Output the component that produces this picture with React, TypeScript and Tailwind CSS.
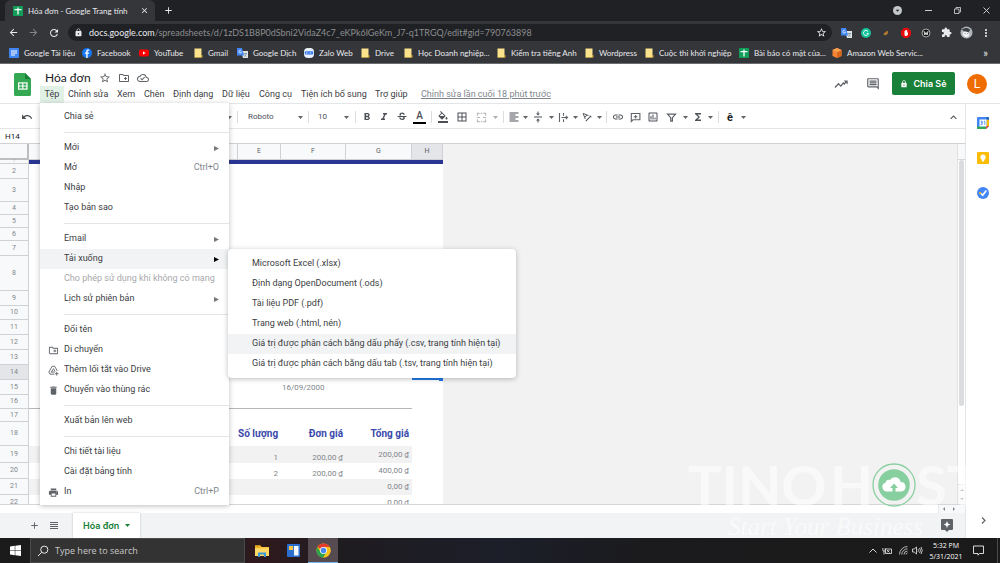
import React from 'react';
import {
  MdAdd,
  MdArrowBack,
  MdArrowDropDown,
  MdArrowForward,
  MdBorderAll,
  MdClose,
  MdDelete,
  MdExpandLess,
  MdExtension,
  MdFormatAlignLeft,
  MdFormatBold,
  MdFormatColorFill,
  MdFormatItalic,
  MdFunctions,
  MdLink,
  MdLock,
  MdMoreVert,
  MdOutlineCloudDone,
  MdOutlineComment,
  MdOutlineCreateNewFolder,
  MdOutlineInsertChart,
  MdPrint,
  MdRefresh,
  MdStarBorder,
  MdStrikethroughS,
  MdTextRotationAngleup,
  MdUndo,
  MdVerticalAlignCenter,
} from 'react-icons/md';

/* ---------- Small drawings ---------- */

const SheetsGlyph = ({ className }: { className: string }) => (
  <svg viewBox="0 0 10 10" className={className}>
    <rect width="10" height="10" rx="0.6" fill="#0f9d58" />
    <path d="M1.5 3.6h7M5 1.5v7" stroke="#fff" strokeWidth="1.3" />
  </svg>
);

const DocsGlyph = () => (
  <svg viewBox="0 0 10 10" className="size-[10px]">
    <rect width="10" height="10" rx="0.8" fill="#4285f4" />
    <path d="M2 3h6M2 5h6M2 7h4" stroke="#fff" strokeWidth="1" />
  </svg>
);

const FacebookGlyph = () => (
  <svg viewBox="0 0 10 10" className="size-[10px]">
    <circle cx="5" cy="5" r="5" fill="#1877f2" />
    <path d="M5.6 10V5.8h1.3l.2-1.4H5.6v-.8c0-.5.2-.8.8-.8h.8V1.6c-1.700-.3-3 .2-3 1.900v.9H2.900v1.400h1.300V10z" fill="#fff" />
  </svg>
);

const YoutubeGlyph = () => (
  <svg viewBox="0 0 10 10" className="size-[10px]">
    <rect y="1.500" width="10" height="7" rx="1.800" fill="#f00" />
    <path d="M4 3.500v3L6.700 5z" fill="#fff" />
  </svg>
);

const FolderGlyph = () => (
  <svg viewBox="0 0 9 10" className="h-[10px] w-[9px]">
    <path d="M.5.5h7v9h-7z" fill="#fbe38e" />
    <path d="M7.500 7h1v2.500h-8V9h6.500z" fill="#d9ac36" />
  </svg>
);

const TranslateGlyph = () => (
  <svg viewBox="0 0 11 10" className="h-[10px] w-[11px]">
    <path d="M4 3h7v7H6z" fill="#dfe3e8" />
    <path d="M6.500 5.500h3.500M8.200 5v1M9.500 5.500C9 7 8 8 7 8.500M7.500 6.500c.5 1 1.200 1.600 2 2" stroke="#607d8b" strokeWidth=".6" fill="none" />
    <path d="M0 0h5l2 7.500H0z" fill="#4285f4" />
    <path d="M4.300 2.900a1.400 1.400 0 1 0 .2 1.200H3.300" stroke="#fff" strokeWidth=".7" fill="none" />
  </svg>
);

const ZaloGlyph = () => (
  <svg viewBox="0 0 10 10" className="size-[10px]">
    <rect width="10" height="10" rx="4" fill="#e9f1ff" />
    <rect x=".8" y="3.300" width="8.400" height="3.200" rx="1" fill="#2f74ee" />
    <path d="M2 4.200h1.300L2 5.700h1.400M4.500 5h1M6.500 4v1.800M7.500 5h.7" stroke="#fff" strokeWidth=".5" fill="none" />
  </svg>
);

const AwsGlyph = () => (
  <svg viewBox="0 0 10 10" className="size-[10px]">
    <path d="M5 0l4.500 2v6L5 10 .5 8V2z" fill="#f58534" />
    <path d="M5 4.200L9.500 2v6L5 10z" fill="#d8661c" />
    <path d="M5 0l4.500 2L5 4.200.5 2z" fill="#fa9f4f" />
  </svg>
);

const SheetsLogo = () => (
  <svg viewBox="0 0 17 23" className="h-[23px] w-[17px]">
    <path d="M1.500 0H11l6 6v15.500a1.500 1.500 0 0 1-1.500 1.500h-14A1.500 1.500 0 0 1 0 21.500v-20A1.500 1.500 0 0 1 1.500 0z" fill="#34a853" />
    <path d="M11 0l6 6h-6z" fill="#188038" />
    <path d="M4 9.300h9.600v7.400H4z" fill="#fff" />
    <path d="M5.300 10.500H8.200v2H5.300zM9.400 10.500h2.900v2H9.400zM5.300 13.600H8.200v2H5.300zM9.400 13.600h2.900v2H9.400z" fill="#34a853" />
  </svg>
);

const ActivityGlyph = () => (
  <svg viewBox="0 0 14 14" className="size-[14px]">
    <path d="M1 10.500l3.500-3.700 2.300 2.300L9.300 6l1 1 2-2.500" stroke="#5f6368" strokeWidth="1.300" fill="none" />
    <path d="M9.700 3.500h4v4z" fill="#5f6368" />
  </svg>
);

const DriveShortcutGlyph = () => (
  <svg viewBox="0 0 12 12" className="size-[11px]" fill="none" stroke="#5f6368" strokeWidth="1">
    <path d="M7 10H2.200L.9 7.700 4.500 1.400h2.700l2.900 5" />
    <path d="M3.800 7.700L5.900 4l1.900 3.200M3 7.700h4.300M9.500 7.500v4M7.500 9.500h4" />
  </svg>
);

const MergeGlyph = () => (
  <svg viewBox="0 0 12 12" className="size-[11px]" fill="none" stroke="#b5b8bb" strokeWidth="1.200">
    <path d="M4 1.500H1.500V4M8 1.500h2.500V4M4 10.500H1.500V8M8 10.500h2.500V8M1 6h3.500M7.500 6H11M5.300 1.500h1.400M5.300 10.500h1.400" />
  </svg>
);

const WrapGlyph = () => (
  <svg viewBox="0 0 11 11" className="size-[11px]" fill="none" stroke="#5f6368" strokeWidth="1.100">
    <path d="M1.500 1v9M5.500 1v2.800M5.500 7.200V10M3.500 5.500h6M7.800 3.800l1.700 1.700-1.700 1.700" />
  </svg>
);

const CommentPlusGlyph = () => (
  <svg viewBox="0 0 11 11" className="size-[11px]" fill="none" stroke="#5f6368" strokeWidth="1.100">
    <path d="M1.300 9.500V1.500h8.600v6.300H3z" />
    <path d="M5.600 2.900v3.600M3.800 4.700h3.600" />
  </svg>
);

const FilterGlyph = () => (
  <svg viewBox="0 0 11 11" className="size-[11px]" fill="none" stroke="#5f6368" strokeWidth="1.200">
    <path d="M1.500 2.200h8L6.400 5.700v3.500H4.700V5.700z" />
  </svg>
);

const ChromeLogo = () => (
  <svg viewBox="0 0 16 16" className="size-[15px]">
    <circle cx="8" cy="8" r="7.500" fill="#fbc116" />
    <path d="M8 8L1.500 4.200A7.500 7.500 0 0 1 14.500 4.250H8z" fill="#e33b2e" />
    <path d="M1.500 4.250A7.500 7.500 0 0 0 7.700 15.500L11.200 9.800 8 8 4.800 9.900z" fill="#2ba24c" />
    <path d="M14.500 4.250H8L11.200 9.900 8 15.500A7.500 7.500 0 0 0 14.500 4.250z" fill="#fbc116" />
    <circle cx="8" cy="8" r="3.700" fill="#fff" />
    <circle cx="8" cy="8" r="2.900" fill="#4587f3" />
  </svg>
);

/* ---------- Chrome window ---------- */

const bookmarks = [
  { label: 'Google Tài liệu', icon: <DocsGlyph />, width: 'w-[73px]' },
  { label: 'Facebook', icon: <FacebookGlyph />, width: 'w-[57px]' },
  { label: 'YouTube', icon: <YoutubeGlyph />, width: 'w-[55px]' },
  { label: 'Gmail', icon: <FolderGlyph />, width: 'w-[43px]' },
  { label: 'Google Dịch', icon: <TranslateGlyph />, width: 'w-[67px]' },
  { label: 'Zalo Web', icon: <ZaloGlyph />, width: 'w-[57px]' },
  { label: 'Drive', icon: <FolderGlyph />, width: 'w-[43px]' },
  { label: 'Học Doanh nghiệp...', icon: <FolderGlyph />, width: 'w-[93px]' },
  { label: 'Kiểm tra tiếng Anh', icon: <FolderGlyph />, width: 'w-[88px]' },
  { label: 'Wordpress', icon: <FolderGlyph />, width: 'w-[60px]' },
  { label: 'Cuộc thi khởi nghiệp', icon: <FolderGlyph />, width: 'w-[94px]' },
  { label: 'Bài báo có mặt của...', icon: <SheetsGlyph className="size-[10px]" />, width: 'w-[93px]' },
  { label: 'Amazon Web Servic...', icon: <AwsGlyph />, width: 'w-[93px]' },
];

function BrowserChrome() {
  return (
    <div className="bg-[#35363a] font-['Lato',sans-serif] text-[#e8eaed]">
      <div className="flex h-[21px] items-center bg-[#202124] pl-[5px]">
        <div className="flex h-full w-[150px] items-center rounded-t-md bg-[#35363a] pl-2 pr-[6px]">
          <SheetsGlyph className="size-[10px]" />
          <span className="ml-[5px] text-[8px]">Hóa đơn - Google Trang tính</span>
          <button aria-label="Close tab" className="ml-auto"><MdClose className="size-[9px]" /></button>
        </div>
        <button aria-label="New tab" className="ml-2"><MdAdd className="size-[11px]" /></button>
        <div className="ml-auto flex items-center">
          <button aria-label="Tab search" className="mr-[23px] flex size-[9px] items-center justify-center rounded-full bg-[#c4c7c9] text-[#202124]">
            <MdArrowDropDown className="size-[9px]" />
          </button>
          <button aria-label="Minimize" className="mr-[22px]">
            <svg viewBox="0 0 7 7" className="size-[7px]"><path d="M0 3.500h7" stroke="#ccc" strokeWidth="1" /></svg>
          </button>
          <button aria-label="Restore" className="mr-[22px]">
            <svg viewBox="0 0 7 7" className="size-[7px]" fill="none" stroke="#ddd" strokeWidth=".8">
              <path d="M.5 2h4.500v4.500H.5zM2 2V.5h4.500V5H5" />
            </svg>
          </button>
          <button aria-label="Close" className="mr-[10px]"><svg viewBox="0 0 7 7" className="size-[7px]"><path d="M.5.5l6 6M6.500.5l-6 6" stroke="#ddd" strokeWidth=".9" /></svg></button>
        </div>
      </div>

      <div className="flex h-[23px] items-center pl-2 pr-1">
        <button aria-label="Back" className="w-5"><MdArrowBack className="size-[11px]" /></button>
        <button aria-label="Forward" className="w-5 text-[#85878a]"><MdArrowForward className="size-[11px]" /></button>
        <button aria-label="Reload" className="w-5"><MdRefresh className="size-[12px]" /></button>
        <label className="flex h-[17px] flex-1 items-center rounded-full bg-[#202124] pl-[6px] pr-[5px] text-[9px]">
          <MdLock className="mr-[6px] size-[9px]" />
          <span>docs.google.com</span>
          <input
            aria-label="Address"
            readOnly
            value="/spreadsheets/d/1zDS1B8P0dSbni2VidaZ4c7_eKPk6lGeKm_J7-q1TRGQ/edit#gid=790763898"
            className="min-w-0 flex-1 bg-transparent text-[#8b8d90] outline-none"
          />
          <MdStarBorder className="size-[11px]" />
        </label>
        <div className="ml-1 grid grid-cols-8 [&>*]:w-5">
          <span className="flex items-center justify-center"><TranslateGlyph /></span>
          <span className="flex items-center justify-center">
            <svg viewBox="0 0 10 10" className="size-[10px]">
              <circle cx="5" cy="5" r="5" fill="#15c39a" />
              <path d="M7 3.500a2.500 2.500 0 1 0 .4 2H5.700" stroke="#fff" strokeWidth=".9" fill="none" />
            </svg>
          </span>
          <span className="flex items-center justify-center">
            <svg viewBox="0 0 6 6" className="size-[6px]"><path d="M1 3c1-.3 1.500-.7 2-1.500C4 .5 5.500 1 5 2.800 4.500 5 2.500 5.800 1.300 5 .6 4.500.7 3.500 1 3z" fill="#b5792f" /></svg>
          </span>
          <span className="flex items-center justify-center">
            <svg viewBox="0 0 10 10" className="size-[10px]">
              <path d="M3 0h4l3 3v4l-3 3H3L0 7V3z" fill="#e60b0b" />
              <path d="M3.500 3v3.500c0 1 .7 1.500 1.600 1.500S7 7 7 6V4l-.8 1V2.500L5.400 2l-.7.3z" fill="#fff" />
            </svg>
          </span>
          <span className="flex items-center justify-center">
            <svg viewBox="0 0 10 10" className="size-[10px]" fill="none">
              <circle cx="5" cy="5" r="4" fill="#111" stroke="#ccc" strokeWidth=".8" />
              <path d="M3 3l.8 4L5 5l1.200 2L7 3M3.500 5h3" stroke="#fff" strokeWidth=".8" />
            </svg>
          </span>
          <button aria-label="Extensions" className="flex items-center justify-center"><MdExtension className="size-[11px]" /></button>
          <span className="flex items-center justify-center">
            <svg viewBox="0 0 14 14" className="size-[13px]">
              <circle cx="7" cy="7" r="6.500" fill="#aeb4b8" />
              <path d="M2 4c2-2 6-3 9 0L9 7 5 6z" fill="#3b4146" />
              <path d="M3 7c2-2 6-1 7 1s-1 4-3 4-5-2-4-5z" fill="#f1f2f3" />
              <path d="M5 8h.8M8 8.200h.8" stroke="#333" strokeWidth=".9" />
            </svg>
          </span>
          <button aria-label="Chrome menu" className="flex items-center justify-center"><MdMoreVert className="size-[12px]" /></button>
        </div>
      </div>

      <nav className="flex h-5 items-center border-b border-[#6b6c6f] pb-[3px] pl-[9px] pr-[12px] pt-px text-[8px]">
        {bookmarks.map((b) => (
          <a key={b.label} href="#" className={`flex shrink-0 items-center gap-[5px] whitespace-nowrap ${b.width}`}>
            {b.icon}
            <span>{b.label}</span>
          </a>
        ))}
        <span className="ml-auto text-[11px] leading-none">»</span>
      </nav>
    </div>
  );
}

/* ---------- File menu ---------- */

type MenuItem = {
  label: string;
  icon?: React.ReactNode;
  shortcut?: string;
  arrow?: boolean;
  disabled?: boolean;
};

const fileMenu: MenuItem[][] = [
  [{ label: 'Chia sẻ' }],
  [
    { label: 'Mới', arrow: true },
    { label: 'Mở', shortcut: 'Ctrl+O' },
    { label: 'Nhập' },
    { label: 'Tạo bản sao' },
  ],
  [
    { label: 'Email', arrow: true },
    { label: 'Tải xuống', arrow: true },
    { label: 'Cho phép sử dụng khi không có mạng', disabled: true },
    { label: 'Lịch sử phiên bản', arrow: true },
  ],
  [
    { label: 'Đổi tên' },
    { label: 'Di chuyển', icon: <MdOutlineCreateNewFolder /> },
    { label: 'Thêm lối tắt vào Drive', icon: <DriveShortcutGlyph /> },
    { label: 'Chuyển vào thùng rác', icon: <MdDelete /> },
  ],
  [{ label: 'Xuất bản lên web' }],
  [
    { label: 'Chi tiết tài liệu' },
    { label: 'Cài đặt bảng tính' },
    { label: 'In', icon: <MdPrint />, shortcut: 'Ctrl+P' },
  ],
];

const downloadFormats = [
  'Microsoft Excel (.xlsx)',
  'Định dạng OpenDocument (.ods)',
  'Tài liệu PDF (.pdf)',
  'Trang web (.html, nén)',
  'Giá trị được phân cách bằng dấu phẩy (.csv, trang tính hiện tại)',
  'Giá trị được phân cách bằng dấu tab (.tsv, trang tính hiện tại)',
];

function DownloadSubmenu() {
  return (
    <div className="absolute left-[188px] top-0 z-30 w-72 rounded-sm bg-white pb-1 pt-[5px] shadow-[0_1px_5px_rgba(60,64,67,0.35)]">
      {downloadFormats.map((format, i) => (
        <button
          key={format}
          className={`block h-5 w-full whitespace-nowrap pl-6 text-left text-[9px] text-[#3c4043] ${i === 4 ? 'bg-[#f1f3f4]' : ''}`}
        >
          {format}
        </button>
      ))}
    </div>
  );
}

function FileMenu() {
  return (
    <div className="absolute left-0 top-full z-20 w-[189px] bg-white pb-[3px] pt-1 text-[9px] text-[#3c4043] shadow-[0_1px_5px_rgba(60,64,67,0.35)]">
      {fileMenu.map((group, g) => (
        <div key={group[0].label}>
          {g > 0 && <hr className="my-[5px] ml-6 border-[#e3e5e8]" />}
          {group.map((item) => {
            const open = item.label === 'Tải xuống';
            return (
              <div key={item.label} className="relative">
                <button
                  disabled={item.disabled}
                  className={`flex h-5 w-full items-center whitespace-nowrap pr-[10px] ${open ? 'bg-[#f1f3f4]' : ''} ${item.disabled ? 'text-[#a7a9ac]' : ''}`}
                >
                  <span className="flex w-6 shrink-0 justify-center pl-[3px] text-[11px] text-[#5f6368]">{item.icon}</span>
                  <span>{item.label}</span>
                  {item.shortcut && <span className="ml-auto text-[#80868b]">{item.shortcut}</span>}
                  {item.arrow && (
                    <svg viewBox="0 0 5 5" className={`ml-auto size-[5px] ${open ? 'fill-black' : 'fill-[#777]'}`}>
                      <path d="M0 0l5 2.500L0 5z" />
                    </svg>
                  )}
                </button>
                {open && <DownloadSubmenu />}
              </div>
            );
          })}
        </div>
      ))}
    </div>
  );
}

/* ---------- Sheets header ---------- */

const menus = [
  { label: 'Chỉnh sửa', width: 'w-[49px]' },
  { label: 'Xem', width: 'w-[27px]' },
  { label: 'Chèn', width: 'w-[29px]' },
  { label: 'Định dạng', width: 'w-[49px]' },
  { label: 'Dữ liệu', width: 'w-[37px]' },
  { label: 'Công cụ', width: 'w-[42px]' },
  { label: 'Tiện ích bổ sung', width: 'w-[74px]' },
  { label: 'Trợ giúp', width: 'w-[46px]' },
];

function DocHeader() {
  return (
    <header className="flex h-10 border-b border-[#e3e5e8] bg-white">
      <a href="#" aria-label="Google Sheets" className="ml-[14px] mt-[9px] w-[26px]"><SheetsLogo /></a>
      <div>
        <div className="flex h-[22px] items-center pl-[5px] pt-[6px] text-[#5f6368]">
          <h1 className="w-[54px] font-['Lato',sans-serif] text-[12px] text-[#202124]">Hóa đơn</h1>
          <button aria-label="Star" className="w-[19px]"><MdStarBorder className="size-[12px]" /></button>
          <button aria-label="Move" className="w-[19px]"><MdOutlineCreateNewFolder className="size-[12px]" /></button>
          <button aria-label="Saved to Drive"><MdOutlineCloudDone className="size-[12px]" /></button>
        </div>
        <nav className="flex h-[17px] items-center whitespace-nowrap text-[9px] text-[#3c4043]">
          <div className="relative h-full w-6">
            <button className="h-full w-full bg-[#e2f1e6]">Tệp</button>
            <FileMenu />
          </div>
          {menus.map((m) => (
            <button key={m.label} className={`pl-1 text-left ${m.width}`}>{m.label}</button>
          ))}
          <a href="#" className="ml-1 text-[#80868b] underline">Chỉnh sửa lần cuối 18 phút trước</a>
        </nav>
      </div>
      <div className="ml-auto flex items-center pr-[13px] text-[#5f6368]">
        <button aria-label="Activity" className="mr-[18px]"><ActivityGlyph /></button>
        <button aria-label="Comments" className="mr-3"><MdOutlineComment className="size-[14px]" /></button>
        <button className="mr-3 flex h-[23px] w-[63px] items-center justify-center gap-[5px] rounded-[2px] bg-[#188038] font-['Inter',sans-serif] text-[9px] font-semibold text-white">
          <MdLock className="size-[8px]" />
          Chia Sẻ
        </button>
        <button aria-label="Account" className="size-5 rounded-full bg-[#ef6c00] text-[12px] text-white">L</button>
      </div>
    </header>
  );
}

/* ---------- Toolbar ---------- */

const Caret = ({ className = 'w-2' }: { className?: string }) => (
  <span className={`flex shrink-0 justify-center ${className}`}>
    <svg viewBox="0 0 5 3" className="h-[3px] w-[5px] fill-[#5f6368]"><path d="M0 0h5L2.500 3z" /></svg>
  </span>
);

const Divider = ({ className }: { className: string }) => (
  <span className={`flex shrink-0 justify-center ${className}`}>
    <span className="h-3 w-px bg-[#dadce0]" />
  </span>
);

function Tool({ label, width, children }: { label: string; width: string; children: React.ReactNode }) {
  return (
    <button aria-label={label} className={`flex shrink-0 items-center justify-center text-[12px] ${width}`}>
      {children}
    </button>
  );
}

function Toolbar() {
  return (
    <div className="flex h-[25px] shrink-0 items-center border-b border-[#e3e5e8] bg-white pr-[5px] pt-[2px] text-[#4d5156]">
      <div className="w-[225px] shrink-0 pl-[17px]">
        <Tool label="Undo" width="w-5"><MdUndo /></Tool>
      </div>
      <Caret />
      <Divider className="w-[9px]" />
      <select aria-label="Font" className="w-[54px] appearance-none pl-[6px] text-[8px]"><option>Roboto</option></select>
      <Caret />
      <Divider className="w-[9px]" />
      <select aria-label="Font size" className="w-[29px] appearance-none pl-[5px] text-[8px]"><option>10</option></select>
      <Caret className="w-[9px]" />
      <Divider className="w-2" />
      <Tool label="Bold" width="w-[15px]"><MdFormatBold /></Tool>
      <Tool label="Italic" width="w-[19px]"><MdFormatItalic /></Tool>
      <Tool label="Strikethrough" width="w-[17px]"><MdStrikethroughS /></Tool>
      <Tool label="Text color" width="w-[19px]">
        <span className="w-[13px] border-b-2 border-black pb-px text-[10px] font-medium leading-none">A</span>
      </Tool>
      <Divider className="w-1" />
      <Tool label="Fill color" width="w-5"><MdFormatColorFill /></Tool>
      <Tool label="Borders" width="w-[18px]"><MdBorderAll /></Tool>
      <Tool label="Merge cells" width="w-5"><MergeGlyph /></Tool>
      <Caret className="w-2 opacity-50" />
      <Divider className="w-2" />
      <Tool label="Horizontal align" width="w-[14px]"><MdFormatAlignLeft /></Tool>
      <Caret />
      <Tool label="Vertical align" width="w-[18px]"><MdVerticalAlignCenter /></Tool>
      <Caret />
      <Tool label="Text wrapping" width="w-4"><WrapGlyph /></Tool>
      <Caret />
      <Tool label="Text rotation" width="w-4"><MdTextRotationAngleup /></Tool>
      <Caret />
      <Divider className="w-[7px]" />
      <Tool label="Insert link" width="w-4"><MdLink /></Tool>
      <Tool label="Insert comment" width="w-[19px]"><CommentPlusGlyph /></Tool>
      <Tool label="Insert chart" width="w-4"><MdOutlineInsertChart /></Tool>
      <Tool label="Filter" width="w-5"><FilterGlyph /></Tool>
      <Caret />
      <Tool label="Functions" width="w-[17px]"><MdFunctions /></Tool>
      <Caret />
      <Divider className="w-2" />
      <Tool label="Input tools" width="w-4"><span className="text-[11px] font-bold leading-none text-[#202124]">ê</span></Tool>
      <Caret className="w-[10px]" />
      <button aria-label="Hide menus" className="ml-auto"><MdExpandLess className="size-[13px]" /></button>
    </div>
  );
}

/* ---------- Grid ---------- */

type Row = { height: string; e?: string; f?: string; g?: string; shaded?: boolean };

const rows: Row[] = [
  { height: 'h-1' },
  { height: 'h-[15px]' },
  { height: 'h-[23px]' },
  { height: 'h-[13px]' },
  { height: 'h-[13px]' },
  { height: 'h-[13px]' },
  { height: 'h-[15px]' },
  { height: 'h-[35px]' },
  { height: 'h-[15px]' },
  { height: 'h-[14px]' },
  { height: 'h-[15px]' },
  { height: 'h-[15px]' },
  { height: 'h-[15px]' },
  { height: 'h-[15px]' },
  { height: 'h-[15px]', f: '16/09/2000' },
  { height: 'h-[14px]' },
  { height: 'h-[13px]' },
  { height: 'h-6', e: 'Số lượng', f: 'Đơn giá', g: 'Tổng giá' },
  { height: 'h-[17px]', e: '1', f: '200,00 ₫', g: '200,00 ₫', shaded: true },
  { height: 'h-4', e: '2', f: '200,00 ₫', g: '400,00 ₫' },
  { height: 'h-4', g: '0,00 ₫', shaded: true },
  { height: 'h-4', g: '0,00 ₫' },
];

function Grid() {
  return (
    <table className="w-[443px] table-fixed border-separate border-spacing-0 bg-white text-[8px] leading-none text-[#80868b]">
      <colgroup>
        <col className="w-[29px]" />
        <col className="w-[53px]" />
        <col className="w-[52px]" />
        <col className="w-[52px]" />
        <col className="w-[52px]" />
        <col className="w-[43px]" />
        <col className="w-[65px]" />
        <col className="w-[66px]" />
        <col className="w-[31px]" />
      </colgroup>
      <thead>
        <tr className="h-4 text-[7px]">
          <th className="border-b-2 border-r-2 border-[#bcbec0] bg-[#f8f9fa]" />
          {['A', 'B', 'C', 'D', 'E', 'F', 'G', 'H'].map((c) => (
            <th
              key={c}
              scope="col"
              className={`border-b border-r border-[#cfd1d4] font-normal text-[#5f6368] ${c === 'H' ? 'bg-[#e3e5e9]' : 'bg-[#f8f9fa]'}`}
            >
              {c}
            </th>
          ))}
        </tr>
      </thead>
      <tbody>
        {rows.map((row, i) => {
          const n = i + 1;
          const fill = n === 1 ? 'bg-[#283593]' : row.shaded ? 'bg-[#f2f2f2]' : '';
          const line = n === 16 ? 'border-b border-[#b7b7b7]' : '';
          const text = n === 18 ? 'text-[10px] font-bold text-[#3949ab]' : '';
          const valign = n > 18 ? 'align-bottom pb-px' : '';
          return (
            <tr key={n} className={row.height}>
              <th
                scope="row"
                className={`border-b border-r border-[#cfd1d4] p-0 font-normal ${n === 1 ? 'text-[3px]' : 'text-[7px]'} ${n === 14 ? 'bg-[#e3e5e9]' : 'bg-[#f8f9fa]'}`}
              >
                {n}
              </th>
              <td colSpan={4} className={`p-0 ${fill} ${line}`} />
              <td className={`whitespace-nowrap p-0 pr-[3px] text-right ${valign} ${fill} ${line} ${text}`}>{row.e}</td>
              <td className={`whitespace-nowrap p-0 pr-[3px] ${n === 15 ? 'pl-px text-left' : 'text-right'} ${valign} ${fill} ${line} ${text}`}>{row.f}</td>
              <td className={`whitespace-nowrap p-0 pr-[3px] text-right ${fill} ${line} ${text}`}>{row.g}</td>
              <td className={`relative p-0 ${n === 1 ? fill : ''} ${n === 14 ? 'border-2 border-[#1a73e8]' : ''}`}>
                {n === 14 && <span className="absolute -bottom-[3px] -right-[2px] size-1 bg-[#1a73e8]" />}
              </td>
            </tr>
          );
        })}
      </tbody>
    </table>
  );
}

const Arrow = ({ d }: { d: string }) => (
  <svg viewBox="0 0 4 4" className="size-1 fill-[#80868b]"><path d={d} /></svg>
);

function Workspace() {
  return (
    <main className="flex min-w-0 flex-1 flex-col">
      <Toolbar />
      <div className="h-[15px] shrink-0 border-b border-[#cfd1d4] bg-white pl-[5px]">
        <input aria-label="Name box" readOnly value="H14" className="block h-full w-8 text-[8px] text-[#202124] outline-none" />
      </div>

      <div className="flex min-h-0 flex-1 overflow-hidden border-b border-[#d5d7da] bg-[#f2f2f2]">
        <div className="min-w-0 flex-1"><Grid /></div>
        <div className="flex w-2 flex-col border-l border-[#dfe1e3] bg-white">
          <div className="h-4 border-b border-[#d5d7da] bg-[#f8f9fa]" />
          <div className="mx-px h-[246px] rounded-full bg-[#dadce0]" />
          <div className="mt-auto flex h-5 flex-col items-center justify-around border-t border-[#e6e8ea] bg-[#f8f9fa]">
            <Arrow d="M0 3h4L2 1z" />
            <Arrow d="M0 1h4L2 3z" />
          </div>
        </div>
      </div>
      <div className="flex h-2 shrink-0 justify-end bg-white">
        <div className="flex w-[27px] items-center gap-[6px] border-l border-[#e6e8ea] bg-[#f8f9fa] pl-[3px]">
          <Arrow d="M3 0v4L1 2z" />
          <Arrow d="M1 0v4l2-2z" />
        </div>
      </div>

      <footer className="flex h-[25px] shrink-0 items-center bg-[#f1f3f4] text-[#5f6368]">
        <button aria-label="Add sheet" className="ml-[29px]"><MdAdd className="size-[11px]" /></button>
        <button aria-label="All sheets" className="ml-[10px]">
          <svg viewBox="0 0 8 8" className="size-2" shapeRendering="crispEdges">
            <path d="M0 .5h8M0 2.500h8M0 4.500h8M0 6.500h8" stroke="#5f6368" strokeWidth="1" />
          </svg>
        </button>
        <button className="ml-[15px] flex h-full w-[67px] items-center justify-between bg-white pl-[10px] pr-[10px] font-['Inter',sans-serif] text-[9px] font-semibold text-[#188038] shadow-[0_0_2px_rgba(60,64,67,0.3)]">
          Hóa đơn
          <svg viewBox="0 0 5 3" className="h-[3px] w-[5px] fill-[#188038]"><path d="M0 0h5L2.500 3z" /></svg>
        </button>
        <button aria-label="Explore" className="ml-auto mr-3">
          <svg viewBox="0 0 12 13" className="h-[13px] w-[12px]">
            <path d="M1 0h10a1 1 0 0 1 1 1v9a1 1 0 0 1-1 1H8l-2 2-2-2H1a1 1 0 0 1-1-1V1a1 1 0 0 1 1-1z" fill="#5f6368" />
            <path d="M6 2l1 2.500L9.500 5.500 7 6.500 6 9 5 6.500 2.500 5.500 5 4.500z" fill="#fff" />
          </svg>
        </button>
      </footer>
    </main>
  );
}

function SidePanel() {
  return (
    <aside className="flex w-[35px] shrink-0 flex-col items-center border-l border-[#e3e5e8] bg-white pt-[13px]">
      <button aria-label="Calendar">
        <svg viewBox="0 0 12 12" className="size-[12px]">
          <path d="M1 0h10a1 1 0 0 1 1 1v8l-3 3H1a1 1 0 0 1-1-1V1a1 1 0 0 1 1-1z" fill="#4285f4" />
          <path d="M9.500 2.500H12V9H9.500z" fill="#fbbc04" />
          <path d="M0 9.500h9V12H1a1 1 0 0 1-1-1z" fill="#34a853" />
          <path d="M9 9h3l-3 3z" fill="#ea4335" />
          <path d="M9.500 0H11a1 1 0 0 1 1 1v1.500H9.500z" fill="#1967d2" />
          <path d="M2.500 2.500h7v7h-7z" fill="#fff" />
          <path d="M3.500 4.200h1.700v1.600H4h1.200v1.800H3.500M6.800 4.500l1-.4v3.800" stroke="#4285f4" strokeWidth=".8" fill="none" />
        </svg>
      </button>
      <button aria-label="Keep" className="mt-[23px]">
        <svg viewBox="0 0 12 12" className="size-[12px]">
          <rect width="12" height="12" rx="1" fill="#fbbc04" />
          <circle cx="6" cy="5.200" r="2.600" fill="#fff" />
          <path d="M4.800 7h2.400v2.500H4.800z" fill="#fff" />
        </svg>
      </button>
      <button aria-label="Tasks" className="mt-[23px]">
        <svg viewBox="0 0 12 12" className="size-[12px]">
          <circle cx="6" cy="6" r="6" fill="#4285f4" />
          <circle cx="3" cy="6" r="1.100" fill="#fbbc04" />
          <path d="M4 6.500l1.700 1.700L9.300 3.500" stroke="#fff" strokeWidth="1.700" fill="none" />
        </svg>
      </button>
      <button aria-label="Hide side panel" className="mb-[14px] mt-auto">
        <svg viewBox="0 0 5 7" className="h-[7px] w-[5px]"><path d="M1 .5l3 3-3 3" stroke="#5f6368" strokeWidth="1.200" fill="none" /></svg>
      </button>
    </aside>
  );
}

function Watermark() {
  return (
    <div className="pointer-events-none absolute bottom-0 right-[34px] z-10 w-[278px] overflow-hidden text-white/55">
      <div className="flex h-[52px] items-center whitespace-nowrap font-['Lato',sans-serif] text-[56px] font-bold leading-none">
        <span className="w-[142px] shrink-0">TINO</span>
        <span className="w-[42px] shrink-0">H</span>
        <svg viewBox="0 0 44 44" className="size-[44px] shrink-0">
          <circle cx="22" cy="22" r="21" fill="none" stroke="#88cfa0" strokeWidth="1.300" />
          <circle cx="22" cy="22" r="15.800" fill="#88cfa0" />
          <path d="M14.500 28.500a4.600 4.600 0 0 1-.8-9c.2-2.200 2.600-3.300 4.500-2.500 2-4 9.500-4 10.500 2a4.800 4.800 0 0 1 1 9.500z" fill="#fff" />
          <path d="M22 20.500l4 4.500h-2.500v4h-3v-4H18z" fill="#88cfa0" />
        </svg>
        <span>ST</span>
      </div>
      <p className="pl-[40px] pt-1 font-['Liberation_Serif',serif] text-[25px] italic leading-[23px]">Start Your Business</p>
    </div>
  );
}

/* ---------- Windows taskbar ---------- */

function Taskbar() {
  return (
    <div className="flex h-[25px] shrink-0 items-center bg-[linear-gradient(90deg,#1b1b1b_0%,#1b1b1b_24%,#30191e_25%,#1f1c20_34%,#1c1e29_50%,#1b1b1d_65%,#1a1a1a_100%)] font-['Open_Sans',sans-serif] text-white">
      <button aria-label="Start" className="flex w-[30px] justify-center">
        <svg viewBox="0 0 11 11" className="size-[11px] fill-white"><path d="M0 1.500L4.800.8v4.400H0zM5.300.7L11 0v5.200H5.300zM0 5.800h4.800v4.400L0 9.500zM5.300 5.800H11V11l-5.700-.7z" /></svg>
      </button>
      <label className="flex h-full w-[215px] items-center border border-[#4a4a4a] bg-[#333] pl-[6px]">
        <svg viewBox="0 0 12 12" className="size-[12px]" fill="none" stroke="#e8e8e8" strokeWidth="1">
          <circle cx="7.300" cy="4.700" r="3.600" />
          <path d="M4.700 7.300L1 11" />
        </svg>
        <input aria-label="Search" placeholder="Type here to search" className="ml-[6px] min-w-0 flex-1 bg-transparent text-[9px] outline-none placeholder:text-[#c9c9c9]" />
      </label>
      <button aria-label="File Explorer" className="flex w-[34px] justify-center">
        <svg viewBox="0 0 14 12" className="h-[12px] w-[14px]">
          <path d="M0 .5h5.500l1 1.500H14v9H0z" fill="#f9c63c" />
          <path d="M0 0.500h5.500v2H0z" fill="#e8a317" />
          <path d="M0 3.500h14V11H0z" fill="#fcd866" />
          <path d="M3 12V7.500h8V12H9V9.500H5V12z" fill="#3a9ad9" />
        </svg>
      </button>
      <button aria-label="Notes" className="flex w-[29px] justify-center">
        <svg viewBox="0 0 13 13" className="size-[13px]">
          <rect width="13" height="13" rx="1" fill="#2a6fd0" />
          <path d="M7 2h4.500v9.500H7z" fill="#f4f7fb" />
          <path d="M2 2h4v4H2z" fill="#f6c344" />
        </svg>
      </button>
      <button aria-label="Google Chrome" className="flex h-full w-[30px] items-center justify-center border-b border-[#76b9ed] bg-[#564b50]"><ChromeLogo /></button>
      <div className="ml-auto flex items-center">
        <button aria-label="Hidden icons" className="mr-[5px]">
          <svg viewBox="0 0 8 5" className="h-[5px] w-2"><path d="M.5 4.500L4 1l3.500 3.500" stroke="#eee" strokeWidth=".9" fill="none" /></svg>
        </button>
        <svg viewBox="0 0 10 8" className="mr-[7px] h-2 w-[10px]" fill="none" stroke="#eee" strokeWidth=".8">
          <path d="M3.500 2h6v4.500h-6zM2 4v3.500M.8 1v2a1.200 1.200 0 0 0 2.400 0V1M5 3l2.500 2.500M7.500 3L5 5.500" />
        </svg>
        <svg viewBox="0 0 9 9" className="mr-1 size-[9px]" fill="none" stroke="#ddd" strokeWidth=".8">
          <path d="M.5 8.500A8 8 0 0 1 8.500.5M2.800 8.500a5.700 5.700 0 0 1 5.700-5.700M5 8.500A3.500 3.500 0 0 1 8.500 5M7 8.500A1.500 1.500 0 0 1 8.500 7" />
        </svg>
        <svg viewBox="0 0 11 9" className="mr-[5px] h-[9px] w-[11px]" fill="none" stroke="#eee" strokeWidth=".8">
          <path d="M.5 3h1.700L4.500 1v7L2.200 6H.5zM6 3.200a2 2 0 0 1 0 2.600M7.500 2a4 4 0 0 1 0 5M9 1a6 6 0 0 1 0 7" />
        </svg>
        <div className="w-9 text-center text-[7px] leading-[11px]">
          <div>5:32 PM</div>
          <div>5/31/2021</div>
        </div>
        <button aria-label="Notifications" className="ml-[9px] mr-[13px]">
          <svg viewBox="0 0 11 11" className="size-[11px]" fill="none" stroke="#eee" strokeWidth=".9"><path d="M.5 1h10v7.500H6.500L5 10.200V8.500H.5z" /></svg>
        </button>
        <span className="mr-[2px] h-[25px] w-px bg-[#4a4a4a]" />
      </div>
    </div>
  );
}

export default function App() {
  return (
    <div className="flex h-screen flex-col overflow-hidden bg-white font-['Roboto',sans-serif]">
      <BrowserChrome />
      <DocHeader />
      <div className="relative flex min-h-0 flex-1">
        <Workspace />
        <SidePanel />
        <Watermark />
      </div>
      <Taskbar />
    </div>
  );
}
